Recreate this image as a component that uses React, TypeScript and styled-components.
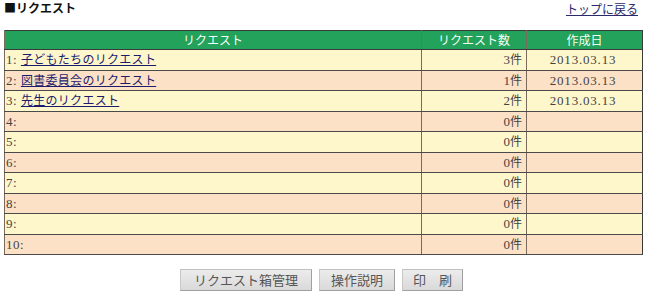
import React from "react";
import styled, { createGlobalStyle } from "styled-components";

const Global = createGlobalStyle`
  html, body { margin: 0; padding: 0; background: #ffffff; }
  body { font-family: "Noto Sans CJK JP", "Noto Sans", sans-serif; color: #333; }
`;

const Page = styled.div`
  width: 635px;
  padding: 0 4px;
  display: flex;
  flex-direction: column;
`;

const TopBar = styled.div`
  display: flex;
  justify-content: space-between;
  align-items: flex-start;
  height: 30px;
`;

const Title = styled.h1`
  margin: 0;
  font-size: 12px;
  line-height: 16px;
  font-weight: bold;
  color: #111;
  font-family: "Noto Sans CJK JP", sans-serif;
`;

const BackLink = styled.a`
  font-size: 12px;
  line-height: 16px;
  padding-top: 1px;
  margin-right: 1px;
  color: #2a2a6a;
  text-decoration: underline;
  font-family: "Noto Sans CJK JP", sans-serif;
`;

const Table = styled.table`
  width: 635px;
  border-collapse: collapse;
  border: 1px solid #3a3a3a;
  table-layout: fixed;
`;

const HeadCell = styled.th<{ $w: number }>`
  width: ${(p) => p.$w}px;
  height: 18px;
  padding: 0;
  background: #22a25a;
  color: #f4fff8;
  font-weight: normal;
  font-size: 12px;
  line-height: 18px;
  text-align: center;
  border-left: 1px solid #7a6a5a;
  border-bottom: 1px solid #3a3a3a;
  font-family: "Noto Sans CJK JP", sans-serif;
`;

const Row = styled.tr<{ $odd: boolean }>`
  background: ${(p) => (p.$odd ? "#fff7cc" : "#fde1c6")};
  height: 20.5px;
`;

const Cell = styled.td<{ $align: "left" | "right" | "center" }>`
  padding: 0 4px 0 1px;
  text-align: ${(p) => p.$align};
  border-bottom: 1px solid #4a4a4a;
  border-left: 1px solid #7a6a5a;
  font-size: 12px;
  line-height: 18px;
  color: #444;
  white-space: nowrap;
`;

const Num = styled.span`
  font-family: "Liberation Serif", serif;
  font-size: 13px;
  letter-spacing: 0.5px;
  color: #444;
`;

const Count = styled.span`
  font-family: "Liberation Serif", serif;
  font-size: 13px;
  color: #444;
  & > i {
    font-style: normal;
    font-family: "Noto Sans CJK JP", sans-serif;
    font-size: 12px;
  }
`;

const DateText = styled.span`
  font-family: "Liberation Serif", serif;
  font-size: 13px;
  letter-spacing: 0.8px;
  color: #444;
`;

const ReqLink = styled.a`
  color: #1c1c6c;
  text-decoration: underline;
  font-size: 12px;
  letter-spacing: 0.3px;
  font-family: "Noto Sans CJK JP", sans-serif;
`;

const Buttons = styled.div`
  display: flex;
  justify-content: center;
  gap: 7px;
  margin-top: 14px;
`;

const Button = styled.button<{ $w: number }>`
  width: ${(p) => p.$w}px;
  height: 22px;
  padding: 0;
  background: linear-gradient(#ececec, #d9d9d9);
  border: 1px solid #a0a0a0;
  border-left-color: #c8c8c8;
  border-top-color: #c0c0c0;
  color: #555;
  font-size: 13px;
  font-family: "Noto Sans CJK JP", sans-serif;
  line-height: 20px;
`;

type Item = { name?: string; count: number; date?: string };

const items: Item[] = [
  { name: "子どもたちのリクエスト", count: 3, date: "2013.03.13" },
  { name: "図書委員会のリクエスト", count: 1, date: "2013.03.13" },
  { name: "先生のリクエスト", count: 2, date: "2013.03.13" },
  { count: 0 },
  { count: 0 },
  { count: 0 },
  { count: 0 },
  { count: 0 },
  { count: 0 },
  { count: 0 },
];

export default function App() {
  return (
    <>
      <Global />
      <Page>
        <TopBar>
          <Title>■リクエスト</Title>
          <BackLink href="#">トップに戻る</BackLink>
        </TopBar>
        <Table>
          <thead>
            <tr>
              <HeadCell $w={416}>リクエスト</HeadCell>
              <HeadCell $w={104}>リクエスト数</HeadCell>
              <HeadCell $w={115}>作成日</HeadCell>
            </tr>
          </thead>
          <tbody>
            {items.map((it, i) => (
              <Row key={i} $odd={i % 2 === 0}>
                <Cell $align="left">
                  <Num>{i + 1}: </Num>
                  {it.name && <ReqLink href="#">{it.name}</ReqLink>}
                </Cell>
                <Cell $align="right">
                  <Count>
                    {it.count}
                    <i>件</i>
                  </Count>
                </Cell>
                <Cell $align="center">
                  {it.date && <DateText>{it.date}</DateText>}
                </Cell>
              </Row>
            ))}
          </tbody>
        </Table>
        <Buttons>
          <Button $w={132}>リクエスト箱管理</Button>
          <Button $w={76}>操作説明</Button>
          <Button $w={61}>印　刷</Button>
        </Buttons>
      </Page>
    </>
  );
}
